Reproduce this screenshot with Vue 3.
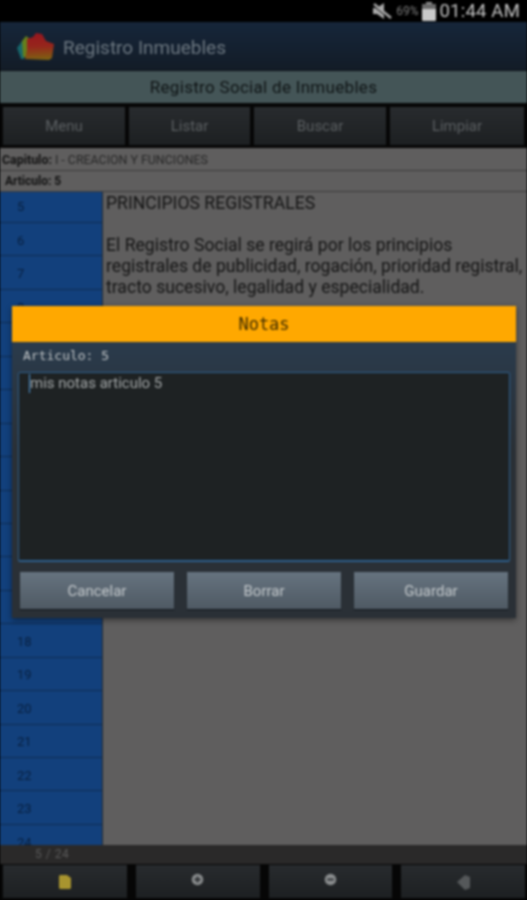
<script setup>
const topButtons = ['Menu', 'Listar', 'Buscar', 'Limpiar']
const articles = Array.from({ length: 20 }, (_, i) => i + 5)
const dialogButtons = ['Cancelar', 'Borrar', 'Guardar']
</script>

<template>
  <div class="screen">
    <div class="status-bar">
      <svg class="mute-icon" width="20" height="18" viewBox="0 0 20 18">
        <path d="M1 6h4l7-5v16l-7-5H1z" fill="#a9a9a9" />
        <path d="M2 2l17 14" stroke="#a9a9a9" stroke-width="2.4" />
        <path d="M2 4.4l15 12.4" stroke="#000" stroke-width="1" />
      </svg>
      <span class="battery-pct">69%</span>
      <svg class="battery-icon" width="14" height="19" viewBox="0 0 14 19">
        <rect x="4" y="0" width="6" height="2" fill="#8f8f8f" />
        <rect x="0" y="2" width="14" height="17" rx="1" fill="#c9c9c9" />
        <rect x="0" y="2" width="14" height="5" fill="#6a6a6a" />
      </svg>
      <span class="clock">01:44 AM</span>
    </div>

    <div class="action-bar">
      <svg class="logo" width="40" height="30" viewBox="0 0 40 30">
        <defs>
          <linearGradient id="logoFill" x1="0.4" y1="0" x2="0.45" y2="1">
            <stop offset="0" stop-color="#96161f" />
            <stop offset="0.5" stop-color="#96261c" />
            <stop offset="1" stop-color="#7d6212" />
          </linearGradient>
        </defs>
        <path d="M1 17l5-7 5 2-3 16H5z" fill="#17666c" />
        <path d="M6 10l4-5 4 3-4 18H7z" fill="#65801c" />
        <path d="M11 8l6-2 3-4 6 1 4 7 8 3-2 14-3 2-24-1 2-9z" fill="url(#logoFill)" />
      </svg>
      <span class="app-title">Registro Inmuebles</span>
    </div>

    <div class="sub-header">Registro Social de Inmuebles</div>

    <div class="top-buttons">
      <div v-for="label in topButtons" :key="label" class="dark-btn">{{ label }}</div>
    </div>

    <div class="info-row chapter"><b>Capitulo:</b> I - CREACION Y FUNCIONES</div>
    <div class="info-row article"><b>Articulo: 5</b></div>

    <div class="main">
      <div class="article-list">
        <div v-for="n in articles" :key="n" class="article-item">{{ n }}</div>
      </div>
      <div class="article-text">
        <p>PRINCIPIOS REGISTRALES</p>
        <p>El Registro Social se regirá por los principios registrales de publicidad, rogación, prioridad registral, tracto sucesivo, legalidad y especialidad.</p>
      </div>
    </div>

    <div class="page-count">5 / 24</div>
    <div class="bottom-buttons">
      <div class="dark-btn">
        <svg width="12" height="14" viewBox="0 0 12 14"><path d="M0 1l1-1h7l4 3v10l-1 1H1l-1-1z" fill="#a8942f" /></svg>
      </div>
      <div class="dark-btn raised">
        <svg width="13" height="13" viewBox="0 0 14 14"><circle cx="7" cy="7" r="6.2" fill="#8a8d8e" /><path d="M3.8 7h6.4M7 3.8v6.4" stroke="#2b2e31" stroke-width="2" /></svg>
      </div>
      <div class="dark-btn raised">
        <svg width="13" height="13" viewBox="0 0 14 14"><circle cx="7" cy="7" r="6.2" fill="#8a8d8e" /><path d="M3.6 7h6.8" stroke="#2b2e31" stroke-width="2" /></svg>
      </div>
      <div class="dark-btn">
        <svg class="back-icon" width="13" height="16" viewBox="0 0 13 16"><path d="M0 8l8-7 5 2v11l-5 2z" fill="#55585a" /></svg>
      </div>
    </div>

    <div class="dialog">
      <div class="dialog-title">Notas</div>
      <div class="dialog-body">
        <div class="dialog-label">Articulo: 5</div>
        <div class="note-field"><span class="caret"></span>mis notas articulo 5</div>
        <div class="dialog-buttons">
          <div v-for="label in dialogButtons" :key="label" class="dialog-btn">{{ label }}</div>
        </div>
      </div>
    </div>
  </div>
</template>

<style>
html, body { margin: 0; background: #000; }
</style>

<style scoped>
.screen {
  position: relative;
  width: 527px;
  height: 900px;
  display: flex;
  flex-direction: column;
  overflow: hidden;
  font-family: Roboto, "Liberation Sans", sans-serif;
  background: #000;
  filter: blur(0.8px);
}

.status-bar {
  height: 22px;
  flex: none;
  display: flex;
  align-items: center;
  justify-content: flex-end;
  padding-right: 7px;
  background: #000;
  color: #b4b4b4;
}
.mute-icon { margin-right: 4px; }
.battery-pct { font-size: 12px; color: #7d7d7d; margin-right: 3px; }
.battery-icon { margin-right: 4px; }
.clock { font-size: 18.5px; letter-spacing: 0.2px; color: #c4c4c4; }

.action-bar {
  height: 49px;
  flex: none;
  box-sizing: border-box;
  display: flex;
  align-items: center;
  padding-left: 16px;
  background: linear-gradient(#16263a, #131c27);
  border-bottom: 1px solid #0c1117;
}
.logo { margin-right: 7px; }
.app-title { font-size: 19px; padding-top: 2px; color: #6c7780; }

.sub-header {
  height: 32px;
  flex: none;
  display: flex;
  align-items: center;
  justify-content: center;
  background: #445557;
  color: #0f1415;
  font-size: 17px;
  letter-spacing: 0.3px;
}

.top-buttons {
  height: 45px;
  flex: none;
  display: grid;
  grid-template-columns: 122px 121px 132px 134px;
  gap: 4px;
  padding: 4px 3px 3px;
  box-sizing: border-box;
  background: #060606;
}
.dark-btn {
  display: flex;
  align-items: center;
  justify-content: center;
  background: linear-gradient(#282b2e, #1d2022);
  color: #5b5f62;
  font-size: 15px;
}
.dark-btn.raised svg { margin-top: -4px; }

.info-row {
  flex: none;
  display: flex;
  align-items: center;
  gap: 3px;
  box-sizing: border-box;
  background: #5f5e5e;
  color: #262626;
  font-size: 12.4px;
  border-bottom: 1px solid #3b3b3b;
}
.chapter { height: 23px; padding-left: 2px; }
.article { height: 21px; padding-left: 5px; font-size: 12px; }
.info-row b { color: #111; }

.main {
  flex: 1;
  min-height: 0;
  display: flex;
  overflow: hidden;
  background: #5f5e5e;
}
.article-list {
  width: 102px;
  flex: none;
  margin-top: -2.44px;
  border-right: 1px solid #262a30;
}
.article-item {
  height: 33.44px;
  box-sizing: border-box;
  display: flex;
  align-items: center;
  padding: 2px 0 0 17px;
  font-size: 13px;
  color: #081f3e;
  background: #12407c;
  border-bottom: 1px solid #0f2c52;
}
.article-text {
  flex: 1;
  padding: 1px 0 0 3px;
  font-size: 17.6px;
  line-height: 21px;
  color: #141414;
}
.article-text p { margin: 0 0 21px; }

.page-count {
  height: 19px;
  flex: none;
  padding-left: 35px;
  background: #2a2929;
  color: #5a5a5a;
  font-size: 12px;
  line-height: 18px;
  letter-spacing: 0.5px;
}
.bottom-buttons {
  height: 36px;
  flex: none;
  display: grid;
  grid-template-columns: repeat(4, 1fr);
  gap: 9px;
  padding: 1px 2px 2px 3px;
  box-sizing: border-box;
  background: #060606;
}

.dialog {
  position: absolute;
  left: 12px;
  top: 306px;
  width: 504px;
  height: 312px;
  display: flex;
  flex-direction: column;
  box-shadow: 0 2px 6px rgba(0, 0, 0, 0.45);
}
.dialog-title {
  height: 36px;
  flex: none;
  display: flex;
  align-items: center;
  justify-content: center;
  background: #ffa800;
  color: #3e2c00;
  font-family: "DejaVu Sans Mono", monospace;
  font-size: 17px;
}
.dialog-body {
  flex: 1;
  display: flex;
  flex-direction: column;
  padding: 0 6px;
  background: linear-gradient(#2a3b4c, #2a3036 40%);
}
.dialog-label {
  height: 30px;
  flex: none;
  box-sizing: border-box;
  display: flex;
  align-items: center;
  padding: 0 0 4px 5px;
  font-family: "DejaVu Sans Mono", monospace;
  font-size: 13px;
  color: #c2c6c8;
}
.note-field {
  height: 190px;
  flex: none;
  box-sizing: border-box;
  padding: 0 10px;
  background: #1e2223;
  border: 1px solid #2e5f8c;
  border-bottom-width: 2px;
  border-radius: 2px;
  color: #a4a8a9;
  font-size: 15px;
  line-height: 20px;
}
.caret {
  display: inline-block;
  width: 1px;
  height: 19px;
  margin-bottom: -5px;
  background: #4d97d8;
}
.dialog-buttons {
  display: grid;
  grid-template-columns: repeat(3, 1fr);
  gap: 13px;
  margin: 10px 2px 0;
}
.dialog-btn {
  height: 37px;
  display: flex;
  align-items: center;
  justify-content: center;
  background: linear-gradient(#66737f, #4f5a64);
  box-shadow: 0 1px 1px #14191e;
  color: #c3c8cb;
  font-size: 15px;
}
</style>
